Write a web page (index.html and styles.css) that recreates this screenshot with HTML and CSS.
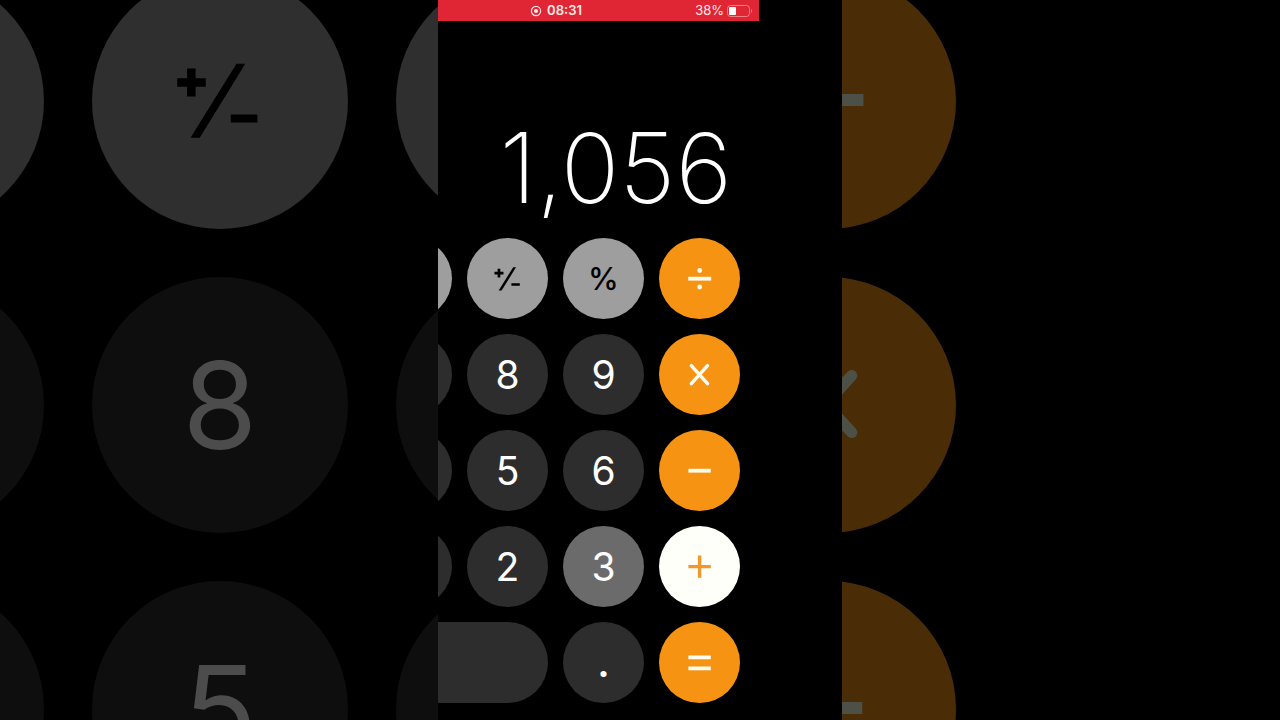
FILE: index.html
```html
<!DOCTYPE html>
<html lang="en">
<head>
<meta charset="UTF-8">
<title>Calculator</title>
<link rel="stylesheet" href="styles.css">
</head>
<body>

<!-- Icon shapes shared by the keypad and the backdrop -->
<svg class="sprite" aria-hidden="true">
  <symbol id="sign" viewBox="0 0 36 36">
    <path fill="currentColor" d="M7.6 7.7h2.7v3.1h3.2v2.7h-3.2v3.1H7.6v-3.1H4.5v-2.7h3.1zM23.2 6.2h2.8L11.6 29.6H8.7zM21.4 22.3h8.4v2.5h-8.4z"/>
  </symbol>
  <symbol id="divide" viewBox="0 0 36 36">
    <path fill="currentColor" d="M6.2 15.8h23v3.8h-23z"/>
    <circle fill="currentColor" cx="17.7" cy="9.5" r="2.4"/>
    <circle fill="currentColor" cx="17.7" cy="26" r="2.4"/>
  </symbol>
  <symbol id="times" viewBox="0 0 36 36">
    <path stroke="currentColor" stroke-width="3.5" stroke-linecap="round" d="M9.3 8.7l16.2 18M25.5 8.7l-16.2 18"/>
  </symbol>
  <symbol id="minus" viewBox="0 0 36 36">
    <path fill="currentColor" d="M6.4 15.8h22.4v3.8H6.4z"/>
  </symbol>
  <symbol id="plus" viewBox="0 0 36 36">
    <path fill="currentColor" d="M6.4 15.9h9.5V6.4h3.4v9.5h9.5v3.4h-9.5v9.5h-3.4v-9.5H6.4z"/>
  </symbol>
  <symbol id="equals" viewBox="0 0 36 36">
    <path fill="currentColor" d="M6.4 10.4h22.4v3.8H6.4zM6.4 21.4h22.4v3.8H6.4z"/>
  </symbol>
</svg>

<div class="page">

  <aside class="backdrop backdrop-left" aria-hidden="true" inert>
    <div class="big-keys">
      <button class="key light"></button>
      <button class="key light"><svg class="icon"><use href="#sign"/></svg></button>
      <button class="key light"></button>
      <button class="key"></button>
      <button class="key">8</button>
      <button class="key"></button>
      <button class="key"></button>
      <button class="key">5</button>
      <button class="key"></button>
    </div>
  </aside>

  <main class="phone">
    <div class="screen">
      <header class="status-bar">
        <div class="clock">
          <svg class="record" viewBox="0 0 12 12" aria-hidden="true">
            <circle cx="6" cy="6" r="4.6" fill="none" stroke="currentColor" stroke-width="1.2"/>
            <circle cx="6" cy="6" r="2.1" fill="currentColor"/>
          </svg>
          <span>08:31</span>
        </div>
        <div class="battery">
          <span>38%</span>
          <svg class="battery-icon" viewBox="0 0 26 12" aria-hidden="true">
            <rect x="0.5" y="0.5" width="22" height="11" rx="3" fill="none" stroke="currentColor" stroke-opacity="0.45"/>
            <rect x="2" y="2" width="7" height="8" rx="1" fill="#fff"/>
            <path d="M24 4c1.6.6 1.6 3.4 0 4z" fill="currentColor" fill-opacity="0.45"/>
          </svg>
        </div>
      </header>

      <output class="result">1,056</output>

      <div class="keypad">
        <button class="key light" aria-label="Clear"></button>
        <button class="key light" aria-label="Change sign"><svg class="icon"><use href="#sign"/></svg></button>
        <button class="key light percent">%</button>
        <button class="key operator" aria-label="Divide"><svg class="icon"><use href="#divide"/></svg></button>

        <button class="key" aria-label="Seven"></button>
        <button class="key">8</button>
        <button class="key">9</button>
        <button class="key operator" aria-label="Multiply"><svg class="icon"><use href="#times"/></svg></button>

        <button class="key" aria-label="Four"></button>
        <button class="key">5</button>
        <button class="key">6</button>
        <button class="key operator" aria-label="Subtract"><svg class="icon"><use href="#minus"/></svg></button>

        <button class="key" aria-label="One"></button>
        <button class="key">2</button>
        <button class="key pressed">3</button>
        <button class="key operator active" aria-label="Add"><svg class="icon"><use href="#plus"/></svg></button>

        <button class="key wide" aria-label="Zero"></button>
        <button class="key point">.</button>
        <button class="key operator" aria-label="Equals"><svg class="icon"><use href="#equals"/></svg></button>
      </div>
    </div>
  </main>

  <aside class="backdrop backdrop-right" aria-hidden="true" inert>
    <div class="big-keys single">
      <button class="key operator"><svg class="icon"><use href="#divide"/></svg></button>
      <button class="key operator"><svg class="icon"><use href="#times"/></svg></button>
      <button class="key operator"><svg class="icon"><use href="#minus"/></svg></button>
    </div>
  </aside>

</div>

</body>
</html>
```
FILE: styles.css
```css
* { margin: 0; padding: 0; box-sizing: border-box; }
body { font-family: Inter, "Liberation Sans", sans-serif; background-color: #000; color: #fff; }
.sprite { display: none; }

.page { display: grid; grid-template-columns: 1fr 404px 1fr; height: 100vh; min-height: 720px; overflow: hidden; }

/* Keys */
.key { display: flex; align-items: center; justify-content: center; height: 81px; border: none; border-radius: 999px; background-color: #2d2d2d; color: #fff; font-family: inherit; font-size: 39px; font-weight: 400; cursor: pointer; }
.key.light { background-color: #9e9e9e; color: #000; }
.key.percent { font-size: 31px; font-weight: 500; }
.key.point { font-weight: 600; }
.key.operator { background-color: #f69313; color: #fffdf0; }
.key.pressed { background-color: #6b6b6b; }
.key.active { background-color: #fffffa; color: #f0982a; }
.key.wide { grid-column: span 2; }
.icon { width: 36px; height: 36px; fill: none; }

/* Calculator */
.phone { overflow: hidden; }
.screen { width: 406px; margin-left: -85px; }
.status-bar { display: grid; grid-template-columns: 1fr auto 1fr; align-items: center; height: 21px; padding: 0 6px; background-color: #e02634; color: #ffe9e6; font-size: 13px; line-height: 21px; }
.clock { display: flex; grid-column: 2; align-items: center; gap: 5px; font-weight: 600; }
.record { width: 12px; height: 12px; }
.battery { display: flex; align-items: center; justify-content: flex-end; gap: 3px; }
.battery-icon { width: 26px; height: 12px; }
.result { display: block; padding: 87px 27px 10px 0; text-align: right; font-size: 97px; font-weight: 200; line-height: 120px; }
.keypad { display: grid; grid-template-columns: repeat(4, 81px); gap: 15px; justify-content: end; padding-right: 19px; }

/* Enlarged dim keys on both sides */
.backdrop { display: flex; overflow: hidden; }
.backdrop-left { justify-content: flex-end; }
.big-keys { display: grid; flex: none; grid-template-columns: repeat(3, 256px); grid-auto-rows: 256px; gap: 48px; margin: -27px -214px 0 0; }
.big-keys.single { grid-template-columns: 256px; margin: -27px 0 0 -142px; }
.backdrop .key { height: 256px; background-color: #0e0e0e; color: #4c4c4c; font-size: 121px; }
.backdrop .key.light { background-color: #2f2f2f; color: #000; }
.backdrop .key.operator { background-color: #4a2d06; color: #4d5047; }
.backdrop .icon { width: 114px; height: 114px; }
```
